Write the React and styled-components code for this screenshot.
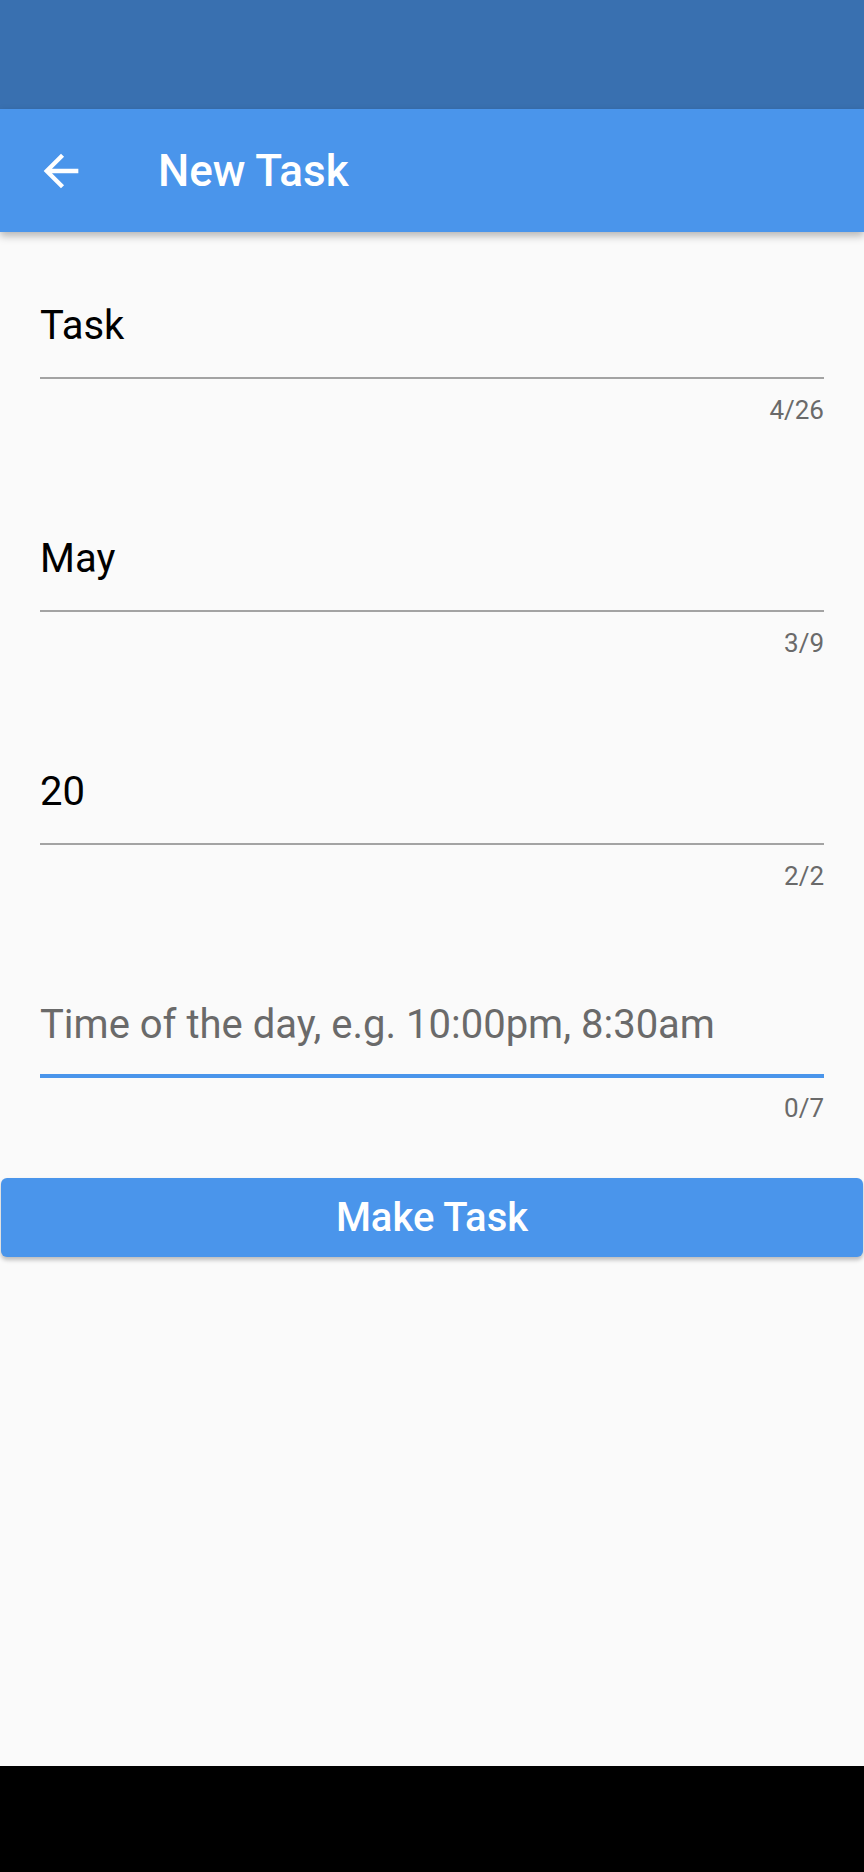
import React from 'react';
import styled, { createGlobalStyle } from 'styled-components';

const fields = [
  { value: 'Task', count: '4/26' },
  { value: 'May', count: '3/9' },
  { value: '20', count: '2/2' },
  { placeholder: 'Time of the day, e.g. 10:00pm, 8:30am', count: '0/7', focused: true },
];

function App() {
  return (
    <>
      <GlobalStyle />
      <Screen>
        <StatusBar />
        <AppBar>
          <BackButton aria-label="back">
            <svg width="52" height="52" viewBox="0 0 24 24" fill="#fff">
              <path d="M20 11H7.83l5.59-5.59L12 4l-8 8 8 8 1.41-1.41L7.83 13H20v-2z" />
            </svg>
          </BackButton>
          <Title>New Task</Title>
        </AppBar>
        <Body>
          <Form>
            {fields.map((field) => (
              <Field key={field.count}>
                <InputLine focused={field.focused}>
                  {field.value ? <Value>{field.value}</Value> : <Hint>{field.placeholder}</Hint>}
                </InputLine>
                <Counter>{field.count}</Counter>
              </Field>
            ))}
          </Form>
          <MakeButton>Make Task</MakeButton>
        </Body>
        <NavBar />
      </Screen>
    </>
  );
}

const GlobalStyle = createGlobalStyle`
  html, body {
    margin: 0;
    padding: 0;
    background: #FAFAFA;
  }
  body {
    font-family: Roboto, "Noto Sans", sans-serif;
  }
`;

const Screen = styled.div`
  display: flex;
  flex-direction: column;
  min-height: 1872px;
  background-color: #FAFAFA;
`;

const StatusBar = styled.div`
  height: 109px;
  background-color: #3970B0;
`;

const AppBar = styled.div`
  position: relative;
  z-index: 1;
  height: 123px;
  display: flex;
  align-items: center;
  background-color: #4A95EB;
  box-shadow: 0 4px 8px rgba(0, 0, 0, 0.28);
`;

const BackButton = styled.div`
  width: 52px;
  height: 52px;
  margin-left: 35px;
  display: flex;
`;

const Title = styled.div`
  margin-left: 71px;
  color: #fff;
  font-size: 44px;
  font-weight: 500;
  line-height: 52px;
`;

const Body = styled.div`
  flex: 1;
  display: flex;
  flex-direction: column;
`;

const Form = styled.div`
  padding: 66px 40px 0;
  display: flex;
  flex-direction: column;
  gap: 105px;
`;

const Field = styled.div`
  display: flex;
  flex-direction: column;
`;

const InputLine = styled.div`
  padding-bottom: ${(p) => (p.focused ? '21px' : '23px')};
  border-bottom: ${(p) => (p.focused ? '4px solid #4A95EB' : '2px solid #A3A3A3')};
  margin-bottom: ${(p) => (p.focused ? '-1px' : '0')};
`;

const Value = styled.div`
  font-size: 40px;
  line-height: 56px;
  color: #000;
`;

const Hint = styled(Value)`
  color: #6A6A6A;
`;

const Counter = styled.div`
  margin-top: 15px;
  align-self: flex-end;
  font-size: 26px;
  line-height: 32px;
  color: #6A6A6A;
`;

const MakeButton = styled.button`
  margin: 54px 1px 0;
  height: 79px;
  border: none;
  border-radius: 6px;
  background-color: #4A95EB;
  color: #fff;
  font-family: Roboto, "Noto Sans", sans-serif;
  font-size: 40px;
  font-weight: 500;
  box-shadow: 0 3px 4px rgba(0, 0, 0, 0.25);
`;

const NavBar = styled.div`
  height: 106px;
  background-color: #000;
`;

export default App;
